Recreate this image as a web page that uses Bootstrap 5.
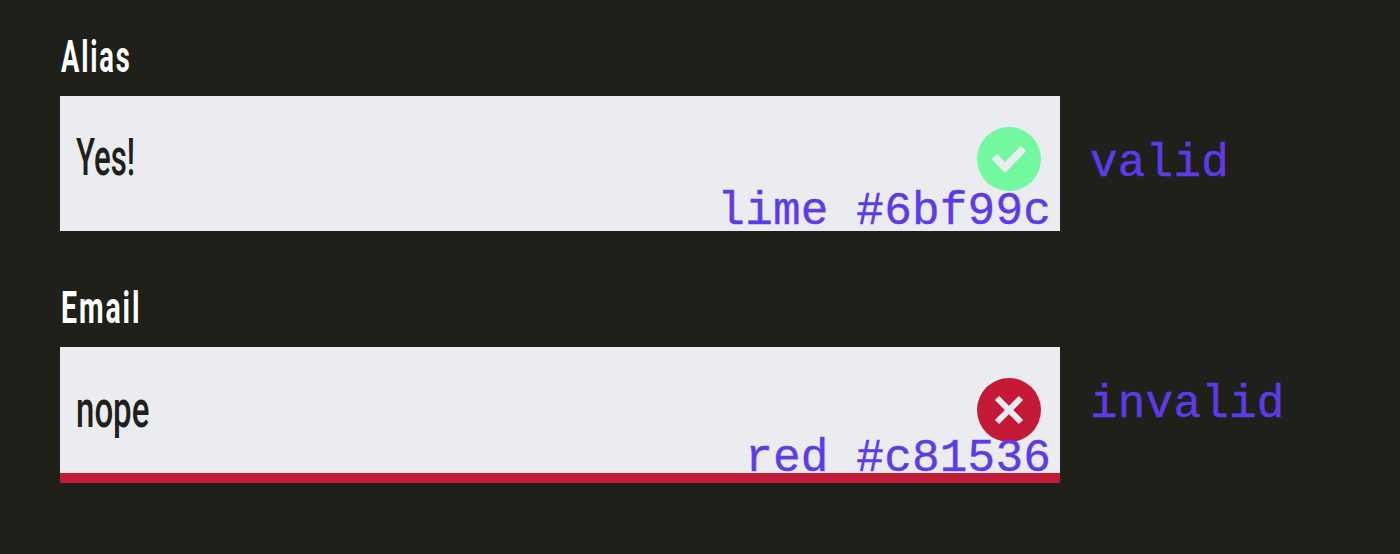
<!DOCTYPE html>
<html lang="en">
<head>
<meta charset="utf-8">
<title>Form validation states</title>
<link href="https://cdn.jsdelivr.net/npm/bootstrap@5.3.0/dist/css/bootstrap.min.css" rel="stylesheet">
<style>
body{background:#20201b;width:1400px;height:554px;overflow:hidden;padding:27px 0 0 60px}
.field-block{height:251px}
.field-title{font:700 44px/60px Roboto,sans-serif;color:#fff;letter-spacing:3px;margin:0 0 9px;padding-left:1px;display:block}
.narrow{display:inline-block;transform-origin:0 50%;transform:scaleX(.62);white-space:nowrap}
.wide-title{transform:scaleX(.645)}
.field-box{width:1000px;height:135px;background:#ebecf0;color:#20201b;padding:0 19px 9px 16px}
.field-box.bad{height:136px;border-bottom:10px solid #c41a37;padding-bottom:0}
.field-value{font:500 52px/60px Roboto,sans-serif;margin-bottom:3px}
.bad .field-value{margin-bottom:0}
.field-value .narrow{transform:scaleX(.6)}
.bad .field-value .narrow{transform:scaleX(.635)}
.note{font:400 46px/52px "Liberation Mono",monospace;color:#5e3be8;letter-spacing:.2px;white-space:pre;-webkit-text-stroke:.4px #5e3be8}
.hex{right:9px;bottom:-7px}
.bad .hex{bottom:-12px}
.state{margin-left:30px}
.state-bad{margin-bottom:20px}
</style>
</head>
<body>
<div class="field-block">
  <label class="field-title"><span class="narrow">Alias</span></label>
  <div class="d-flex align-items-center">
    <div class="field-box position-relative d-flex align-items-center justify-content-between">
      <span class="field-value"><span class="narrow">Yes!</span></span>
      <svg width="64" height="64" viewBox="0 0 64 64"><circle cx="32" cy="32" r="32" fill="#73f8a0"/><path d="M17.500 29.500 28 40.500 46.500 21.500" fill="none" stroke="#ebecf0" stroke-width="7.500"/></svg>
      <span class="note hex position-absolute">lime #6bf99c</span>
    </div>
    <span class="note state">valid</span>
  </div>
</div>
<div class="field-block">
  <label class="field-title"><span class="narrow wide-title">Email</span></label>
  <div class="d-flex align-items-center">
    <div class="field-box bad position-relative d-flex align-items-center justify-content-between">
      <span class="field-value"><span class="narrow">nope</span></span>
      <svg width="64" height="64" viewBox="0 0 64 64"><circle cx="32" cy="32" r="32" fill="#c41a37"/><path d="M20 20 44 44M44 20 20 44" fill="none" stroke="#ebecf0" stroke-width="6"/></svg>
      <span class="note hex position-absolute">red #c81536</span>
    </div>
    <span class="note state state-bad">invalid</span>
  </div>
</div>
<script src="https://cdn.jsdelivr.net/npm/bootstrap@5.3.0/dist/js/bootstrap.bundle.min.js"></script>
</body>
</html>
